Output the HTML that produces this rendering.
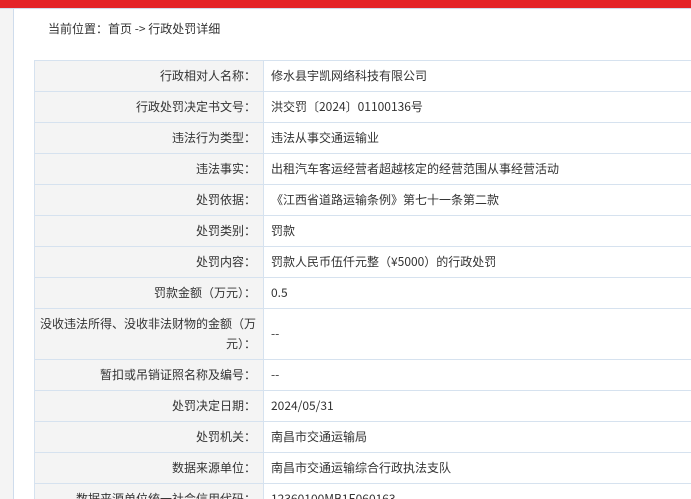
<!DOCTYPE html>
<html><head><meta charset="utf-8"><style>
html,body{margin:0;width:691px;height:499px;overflow:hidden}
body{background:#fff;font-family:"Noto Sans CJK SC","Liberation Sans",sans-serif;font-size:12px;color:#333;position:relative}
.red{position:absolute;left:0;top:0;width:691px;height:8px;background:#e42328}
.line{position:absolute;left:0;top:8px;width:691px;height:1px;background:#cfdcec}
.side{position:absolute;left:0;top:9px;width:13px;height:490px;background:#f4f4f4;border-right:1px solid #cfdcec}
.crumb{position:absolute;left:48px;top:21px;line-height:16px}
table{position:absolute;left:34px;top:60px;width:700px;border-collapse:collapse}
td{border:1px solid #d6e2ef;height:30px;padding:0;line-height:20px}
td.l{width:221px;background:#f4f4f4;text-align:right;padding-right:7px}
td.v{padding-left:7px}
</style></head><body>
<div class="red"></div><div class="line"></div><div class="side"></div>
<div class="crumb">当前位置：首页 -&gt; 行政处罚详细</div>
<table>
<tr><td class="l">行政相对人名称：</td><td class="v">修水县宇凯网络科技有限公司</td></tr>
<tr><td class="l">行政处罚决定书文号：</td><td class="v">洪交罚〔2024〕01100136号</td></tr>
<tr><td class="l">违法行为类型：</td><td class="v">违法从事交通运输业</td></tr>
<tr><td class="l">违法事实：</td><td class="v">出租汽车客运经营者超越核定的经营范围从事经营活动</td></tr>
<tr><td class="l">处罚依据：</td><td class="v">《江西省道路运输条例》第七十一条第二款</td></tr>
<tr><td class="l">处罚类别：</td><td class="v">罚款</td></tr>
<tr><td class="l">处罚内容：</td><td class="v">罚款人民币伍仟元整（¥5000）的行政处罚</td></tr>
<tr><td class="l">罚款金额（万元）：</td><td class="v">0.5</td></tr>
<tr><td class="l" style="height:50px">没收违法所得、没收非法财物的金额（万元）：</td><td class="v">--</td></tr>
<tr><td class="l">暂扣或吊销证照名称及编号：</td><td class="v">--</td></tr>
<tr><td class="l">处罚决定日期：</td><td class="v">2024/05/31</td></tr>
<tr><td class="l">处罚机关：</td><td class="v">南昌市交通运输局</td></tr>
<tr><td class="l">数据来源单位：</td><td class="v">南昌市交通运输综合行政执法支队</td></tr>
<tr><td class="l">数据来源单位统一社会信用代码：</td><td class="v">12360100MB1E060163</td></tr>
</table>
</body></html>
